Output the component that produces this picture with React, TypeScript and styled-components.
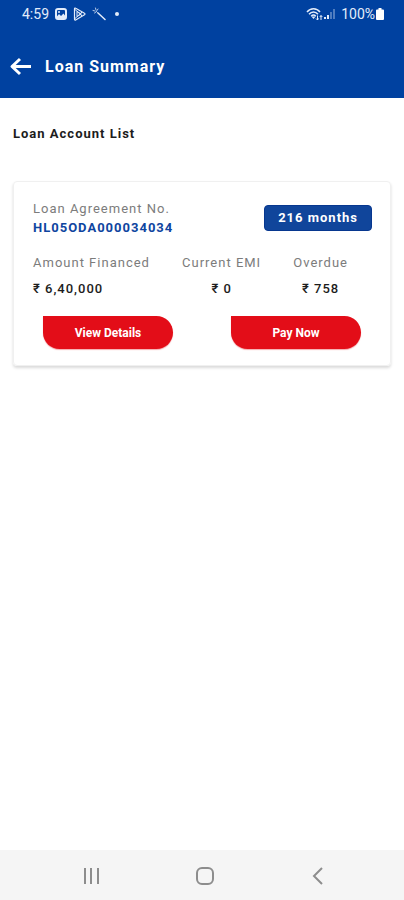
import React from "react";
import styled, { createGlobalStyle } from "styled-components";

const GlobalStyle = createGlobalStyle`
  *, *::before, *::after { box-sizing: border-box; }
  body {
    margin: 0;
    background: #ffffff;
    color: #1c1c1c;
    font-family: Roboto, "Liberation Sans", sans-serif;
  }
  h1, h2, p, dl, dt, dd { margin: 0; }
  button { font-family: inherit; cursor: pointer; }
`;

const Screen = styled.div`
  display: flex;
  flex-direction: column;
  min-height: 100vh;
`;

const Header = styled.header`
  background: #0041a0;
  color: #ffffff;
`;

const StatusBar = styled.div`
  display: flex;
  align-items: center;
  justify-content: space-between;
  height: 28px;
  padding: 0 20px 0 22px;
  font-size: 14px;
  line-height: 20px;
  color: #e3ecfa;
`;

const StatusGroup = styled.div<{ $gap: number }>`
  display: flex;
  align-items: center;
  gap: ${(p) => p.$gap}px;
`;

const AppBar = styled.div`
  display: flex;
  align-items: center;
  gap: 12px;
  height: 70px;
  padding: 8px 9px 0;
`;

const IconButton = styled.button`
  display: flex;
  align-items: center;
  justify-content: center;
  padding: 0;
  border: 0;
  background: transparent;
  color: inherit;
`;

const Title = styled.h1`
  font-size: 16px;
  line-height: 24px;
  font-weight: 700;
  letter-spacing: 1px;
`;

const Main = styled.main`
  flex: 1;
  padding: 26px 13px;
`;

const SectionTitle = styled.h2`
  font-size: 13px;
  line-height: 20px;
  font-weight: 700;
  letter-spacing: 1px;
`;

const Card = styled.section`
  margin-top: 37px;
  padding: 17px 0 16px;
  border: 1px solid #f0f0f0;
  border-radius: 4px;
  box-shadow: 0 2px 3px rgba(0, 0, 0, 0.15);
`;

const CardHead = styled.div`
  display: flex;
  align-items: center;
  justify-content: space-between;
  padding: 0 18px 0 19px;
`;

const Label = styled.dt`
  font-size: 13px;
  line-height: 20px;
  letter-spacing: 1px;
  color: #7c7c7c;
`;

const AccountNumber = styled.dd`
  font-size: 13px;
  line-height: 18px;
  font-weight: 700;
  letter-spacing: 1px;
  color: #0f45a0;
`;

const Tenure = styled.p`
  padding: 3px 13px;
  border: 1px solid #07378f;
  border-radius: 4px;
  background: #10459b;
  color: #ffffff;
  font-size: 13px;
  line-height: 18px;
  font-weight: 700;
  letter-spacing: 1px;
`;

const Stats = styled.dl`
  display: flex;
  justify-content: space-between;
  margin-top: 16px;
  padding: 0 42px 0 19px;
`;

const Stat = styled.div<{ $align: "left" | "center" }>`
  text-align: ${(p) => p.$align};
`;

const Amount = styled.dd`
  margin-top: 6px;
  font-size: 13px;
  line-height: 20px;
  font-weight: 500;
  letter-spacing: 1px;
`;

const Actions = styled.div`
  display: grid;
  grid-template-columns: 1fr 1fr;
  justify-items: center;
  margin-top: 17px;
`;

const ActionButton = styled.button`
  width: 130px;
  height: 33px;
  padding: 0;
  border: 0;
  border-radius: 0 17px 17px 17px;
  background: #e30d18;
  box-shadow: 0 1px 1px rgba(227, 13, 24, 0.35);
  color: #ffffff;
  font-size: 12px;
  line-height: 16px;
  font-weight: 700;
`;

const SystemNav = styled.nav`
  display: flex;
  justify-content: space-between;
  align-items: center;
  height: 50px;
  padding: 2px 74px 0 79px;
  background: #f5f5f5;
  color: #8d8d8d;
`;

const PictureIcon = () => (
  <svg width="12" height="12" viewBox="0 0 12 12" aria-hidden="true">
    <rect x="1" y="1" width="10" height="10" rx="2" fill="none" stroke="currentColor" strokeWidth="2" />
    <path d="M1 9.500 4 6 6 8 8.500 5.500 11 9v2H1z" fill="currentColor" />
    <circle cx="4" cy="4" r="1" fill="currentColor" />
  </svg>
);

const PlayIcon = () => (
  <svg width="13" height="14" viewBox="0 0 13 14" fill="none" stroke="currentColor" aria-hidden="true">
    <path d="M1.500 1.800v10.400c0 .7.600 1 1.200.7l8.800-5.100c.6-.3.600-1.200 0-1.500L2.700 1.200c-.6-.4-1.200-.1-1.200.6z" strokeWidth="1.200" />
    <path d="m4 4.500 4.500 2.500L4 9.500zM1.500 12 9 5M1.500 2 9 9" strokeWidth="1" />
  </svg>
);

const WandIcon = () => (
  <svg width="14" height="14" viewBox="0 0 14 14" fill="none" stroke="currentColor" strokeLinecap="round" aria-hidden="true">
    <path d="m6 6 7 6.500" strokeWidth="1.500" />
    <path d="M1 3.500 3 4M3.500 1 4 3M6 2 5 3.500M2.500 6 4 5M4.500 4.500l1 1" strokeWidth="1" opacity="0.8" />
  </svg>
);

const DotIcon = () => (
  <svg width="8" height="4" viewBox="0 0 8 4" aria-hidden="true">
    <circle cx="5" cy="2" r="2" fill="currentColor" />
  </svg>
);

const WifiIcon = () => (
  <svg width="17" height="14" viewBox="0 0 17 14" fill="none" stroke="currentColor" aria-hidden="true">
    <path d="M1 5c3.500-4.300 9.500-4.300 13 0M3 7.200c2.600-3 6.400-3 9 0M5.200 9.300c1.500-1.600 3.100-1.600 4.600 0" strokeWidth="1.500" />
    <path d="m5.500 9.500 2 2.500 2-2.500z" fill="currentColor" stroke="none" />
    <path d="M11.500 8.500v4.500M10 11.500l1.500 1.500 1-1.500M15 13V8.500M13.800 10 15 8.500l1.300 1.500" strokeWidth="1" />
  </svg>
);

const SignalIcon = () => (
  <svg width="12" height="12" viewBox="0 0 12 12" fill="currentColor" aria-hidden="true">
    <path d="M0 9h2v2H0zM3 7h2v4H3z" />
    <path d="M6 4h2v7H6zM9 1h2v10H9z" opacity="0.35" />
  </svg>
);

const BatteryIcon = () => (
  <svg width="8" height="12" viewBox="0 0 8 12" fill="#ffffff" aria-hidden="true">
    <path d="M2.500 0h3v1.500H7a1 1 0 0 1 1 1V11a1 1 0 0 1-1 1H1a1 1 0 0 1-1-1V2.500a1 1 0 0 1 1-1h1.500z" />
  </svg>
);

const BackArrow = () => (
  <svg width="24" height="20" viewBox="0 0 24 20" fill="none" stroke="currentColor" strokeWidth="3" strokeLinejoin="round" aria-hidden="true">
    <path d="M22 9.500H3.500M11 2 3 9.500l8 7.500" />
  </svg>
);

const RecentsIcon = () => (
  <svg width="24" height="24" viewBox="0 0 24 24" stroke="currentColor" strokeWidth="2" aria-hidden="true">
    <path d="M6 4v16M12 4v16M19 4v16" />
  </svg>
);

const HomeIcon = () => (
  <svg width="24" height="24" viewBox="0 0 24 24" fill="none" stroke="currentColor" strokeWidth="2" aria-hidden="true">
    <rect x="4" y="4" width="16" height="16" rx="5" />
  </svg>
);

const ChevronIcon = () => (
  <svg width="24" height="24" viewBox="0 0 24 24" fill="none" stroke="currentColor" strokeWidth="2" aria-hidden="true">
    <path d="m16 4-8 8 8 8" />
  </svg>
);

const stats: { label: string; value: string; align: "left" | "center" }[] = [
  { label: "Amount Financed", value: "₹ 6,40,000", align: "left" },
  { label: "Current EMI", value: "₹ 0", align: "center" },
  { label: "Overdue", value: "₹ 758", align: "center" },
];

export default function App() {
  return (
    <Screen>
      <GlobalStyle />
      <Header>
        <StatusBar>
          <StatusGroup $gap={6}>
            <span>4:59</span>
            <PictureIcon />
            <PlayIcon />
            <WandIcon />
            <DotIcon />
          </StatusGroup>
          <StatusGroup $gap={5}>
            <StatusGroup $gap={1}>
              <WifiIcon />
              <SignalIcon />
            </StatusGroup>
            <StatusGroup $gap={1}>
              <span>100%</span>
              <BatteryIcon />
            </StatusGroup>
          </StatusGroup>
        </StatusBar>
        <AppBar>
          <IconButton type="button" aria-label="Back">
            <BackArrow />
          </IconButton>
          <Title>Loan Summary</Title>
        </AppBar>
      </Header>

      <Main>
        <SectionTitle>Loan Account List</SectionTitle>
        <Card>
          <CardHead>
            <dl>
              <Label>Loan Agreement No.</Label>
              <AccountNumber>HL05ODA000034034</AccountNumber>
            </dl>
            <Tenure>216 months</Tenure>
          </CardHead>
          <Stats>
            {stats.map((s) => (
              <Stat key={s.label} $align={s.align}>
                <Label>{s.label}</Label>
                <Amount>{s.value}</Amount>
              </Stat>
            ))}
          </Stats>
          <Actions>
            <ActionButton type="button">View Details</ActionButton>
            <ActionButton type="button">Pay Now</ActionButton>
          </Actions>
        </Card>
      </Main>

      <SystemNav aria-label="System navigation">
        <IconButton type="button" aria-label="Recent apps">
          <RecentsIcon />
        </IconButton>
        <IconButton type="button" aria-label="Home">
          <HomeIcon />
        </IconButton>
        <IconButton type="button" aria-label="Go back">
          <ChevronIcon />
        </IconButton>
      </SystemNav>
    </Screen>
  );
}
